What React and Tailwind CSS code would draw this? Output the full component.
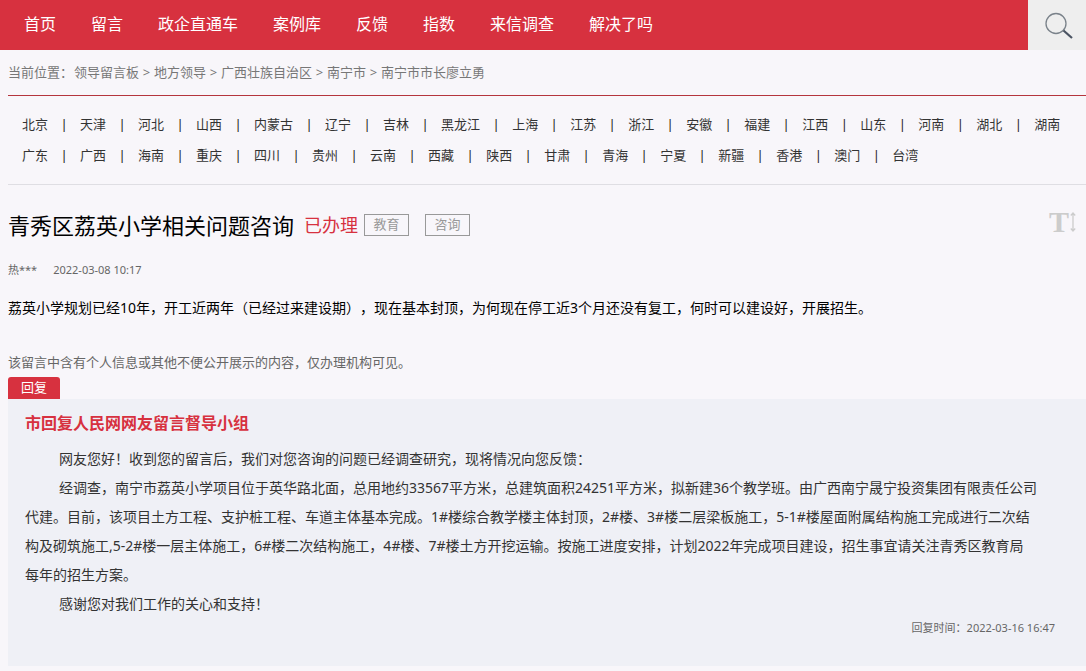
const navItems = ['首页', '留言', '政企直通车', '案例库', '反馈', '指数', '来信调查', '解决了吗'];

const crumbs = ['领导留言板', '地方领导', '广西壮族自治区', '南宁市', '南宁市市长廖立勇'];

const regionRows = [
  ['北京', '天津', '河北', '山西', '内蒙古', '辽宁', '吉林', '黑龙江', '上海', '江苏', '浙江', '安徽', '福建', '江西', '山东', '河南', '湖北', '湖南'],
  ['广东', '广西', '海南', '重庆', '四川', '贵州', '云南', '西藏', '陕西', '甘肃', '青海', '宁夏', '新疆', '香港', '澳门', '台湾'],
];

function Header() {
  return (
    <header className="flex h-[50px] bg-[#d7313f]">
      <nav className="flex flex-1 items-center gap-[35px] pb-[2px] pl-6 text-base text-white">
        {navItems.map((item) => (
          <a key={item} href="#" className="whitespace-nowrap">{item}</a>
        ))}
      </nav>
      <button type="button" aria-label="搜索" className="flex w-[58px] items-center justify-center bg-[#eeeeee]">
        <svg width="32" height="30" viewBox="0 0 32 30" fill="none">
          <circle cx="15" cy="13.5" r="10" stroke="#7a828a" strokeWidth="1.3" />
          <path d="M22.5 20.5 L31 28" stroke="#4a5362" strokeWidth="2.2" />
        </svg>
      </button>
    </header>
  );
}

function Breadcrumb() {
  return (
    <nav className="flex h-[46px] items-center border-b border-[#b5353d] text-[13px] text-[#777777]">
      <span className="w-[66px] whitespace-nowrap">当前位置：</span>
      {crumbs.map((crumb, i) => (
        <span key={crumb} className="flex whitespace-nowrap">
          {i > 0 && <span className="w-[15px] text-center">&gt;</span>}
          <a href="#">{crumb}</a>
        </span>
      ))}
    </nav>
  );
}

function Regions() {
  return (
    <nav className="border-b border-[#dfdee3] pt-[13px] pb-[13px] pl-[14px] text-[13px] text-[#333333]">
      {regionRows.map((row) => (
        <ul key={row[0]} className="flex h-[31px] items-center">
          {row.map((name, i) => (
            <li key={name} className="flex items-center whitespace-nowrap">
              {i > 0 && <span className="w-8 text-center text-[#222222]">|</span>}
              <a href="#">{name}</a>
            </li>
          ))}
        </ul>
      ))}
    </nav>
  );
}

function Tag({ children }) {
  return (
    <span className="flex h-[22px] w-[45px] items-center justify-center border border-[#999999] text-[13px] text-[#999999]">
      {children}
    </span>
  );
}

function Message() {
  return (
    <article className="pt-5">
      <div className="flex h-10 items-center">
        <h1 className="text-[22px] leading-8 text-black">青秀区荔英小学相关问题咨询</h1>
        <span className="ml-[10px] text-lg text-[#d7313f]">已办理</span>
        <div className="ml-[6px] flex gap-4">
          <Tag>教育</Tag>
          <Tag>咨询</Tag>
        </div>
        <button type="button" aria-label="字号" className="mr-[10px] ml-auto flex items-center gap-px self-start text-[#cccccc]">
          <span className="font-['Liberation_Serif',serif] text-[30px] leading-[34px] font-bold">T</span>
          <svg width="6" height="20" viewBox="0 0 6 20" fill="none" stroke="currentColor" strokeWidth="1.3">
            <path d="M3 1 V19 M0.8 3.5 L3 1 L5.2 3.5 M0.8 16.5 L3 19 L5.2 16.5" />
          </svg>
        </button>
      </div>
      <p className="flex h-[50px] items-center gap-4 text-[11px] text-[#666666]">
        <span>热***</span>
        <time>2022-03-08 10:17</time>
      </p>
      <p className="text-sm leading-[26px] text-black">
        荔英小学规划已经10年，开工近两年（已经过来建设期），现在基本封顶，为何现在停工近3个月还没有复工，何时可以建设好，开展招生。
      </p>
      <p className="mt-[26px] text-[13px] leading-[30px] text-[#666666]">
        该留言中含有个人信息或其他不便公开展示的内容，仅办理机构可见。
      </p>
    </article>
  );
}

function Reply() {
  return (
    <section>
      <div className="flex h-[22px] w-[52px] items-center justify-center rounded-t-[3px] bg-[#d7313f] text-[13px] text-white">回复</div>
      <div className="bg-[#eff0f6] pt-2 pr-[31px] pb-7 pl-[17px]">
        <h2 className="text-base leading-8 font-bold text-[#d7313f]">市回复人民网网友留言督导小组</h2>
        <div className="-mr-4 mt-[5px] text-sm leading-[29px] text-[#333333]">
          <p className="indent-[34px]">网友您好！收到您的留言后，我们对您咨询的问题已经调查研究，现将情况向您反馈：</p>
          <p className="indent-[34px]">
            经调查，南宁市荔英小学项目位于英华路北面，总用地约33567平方米，总建筑面积24251平方米，拟新建36个教学班。由广西南宁晟宁投资集团有限责任公司
            <br />
            代建。目前，该项目土方工程、支护桩工程、车道主体基本完成。1#楼综合教学楼主体封顶，2#楼、3#楼二层梁板施工，5-1#楼屋面附属结构施工完成进行二次结
            <br />
            构及砌筑施工,5-2#楼一层主体施工，6#楼二次结构施工，4#楼、7#楼土方开挖运输。按施工进度安排，计划2022年完成项目建设，招生事宜请关注青秀区教育局
            <br />
            每年的招生方案。
          </p>
          <p className="indent-[34px]">感谢您对我们工作的关心和支持！</p>
        </div>
        <p className="text-right text-[11px] leading-5 text-[#666666]">
          回复时间：<time>2022-03-16 16:47</time>
        </p>
      </div>
    </section>
  );
}

export default function App() {
  return (
    <div className="min-h-screen bg-[#f8f6fa] font-['Noto_Sans','Noto_Sans_CJK_SC',sans-serif] [text-spacing-trim:space-all]" lang="zh-CN">
      <Header />
      <main className="pl-2">
        <Breadcrumb />
        <Regions />
        <Message />
        <Reply />
      </main>
    </div>
  );
}
